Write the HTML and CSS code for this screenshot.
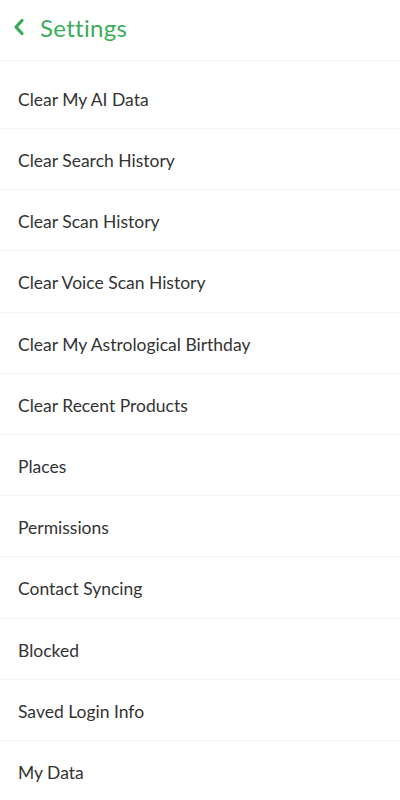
FILE: index.html
```html
<!DOCTYPE html>
<html>
<head>
<meta charset="utf-8">
<link rel="stylesheet" href="styles.css">
</head>
<body>
<div class="screen">
  <header class="header">
    <svg class="back" width="12" height="18" viewBox="0 0 12 18"><path d="M9 2.5 L3 9 L9 15.5" fill="none" stroke="#33ab55" stroke-width="3.2" stroke-linecap="round" stroke-linejoin="round"/></svg>
    <span class="title">Settings</span>
  </header>
  <ul class="list">
    <li class="row">Clear My AI Data</li>
    <li class="row">Clear Search History</li>
    <li class="row">Clear Scan History</li>
    <li class="row">Clear Voice Scan History</li>
    <li class="row">Clear My Astrological Birthday</li>
    <li class="row">Clear Recent Products</li>
    <li class="row">Places</li>
    <li class="row">Permissions</li>
    <li class="row">Contact Syncing</li>
    <li class="row">Blocked</li>
    <li class="row">Saved Login Info</li>
    <li class="row">My Data</li>
  </ul>
</div>
</body>
</html>
```
FILE: styles.css
```css
html, body { margin: 0; padding: 0; background: #fff; }
.screen { width: 400px; height: 800px; overflow: hidden; font-family: Lato, "Open Sans", sans-serif; }
.header { height: 61px; display: flex; align-items: center; padding-left: 13px; gap: 15px; border-bottom: 1px solid #f3f3f3; box-sizing: border-box; padding-bottom: 6px; }
.back { display: block; }
.title { font-size: 24px; color: #3aad5a; letter-spacing: 0.3px; }
.list { list-style: none; margin: 0; padding: 0; }
.row { height: 61.2px; box-sizing: border-box; display: flex; align-items: center; padding-left: 18px; padding-top: 3px; font-size: 17.5px; color: #333; border-bottom: 1px solid #f4f4f4; }
.row:first-child { height: 68px; padding-top: 10px; }
```
